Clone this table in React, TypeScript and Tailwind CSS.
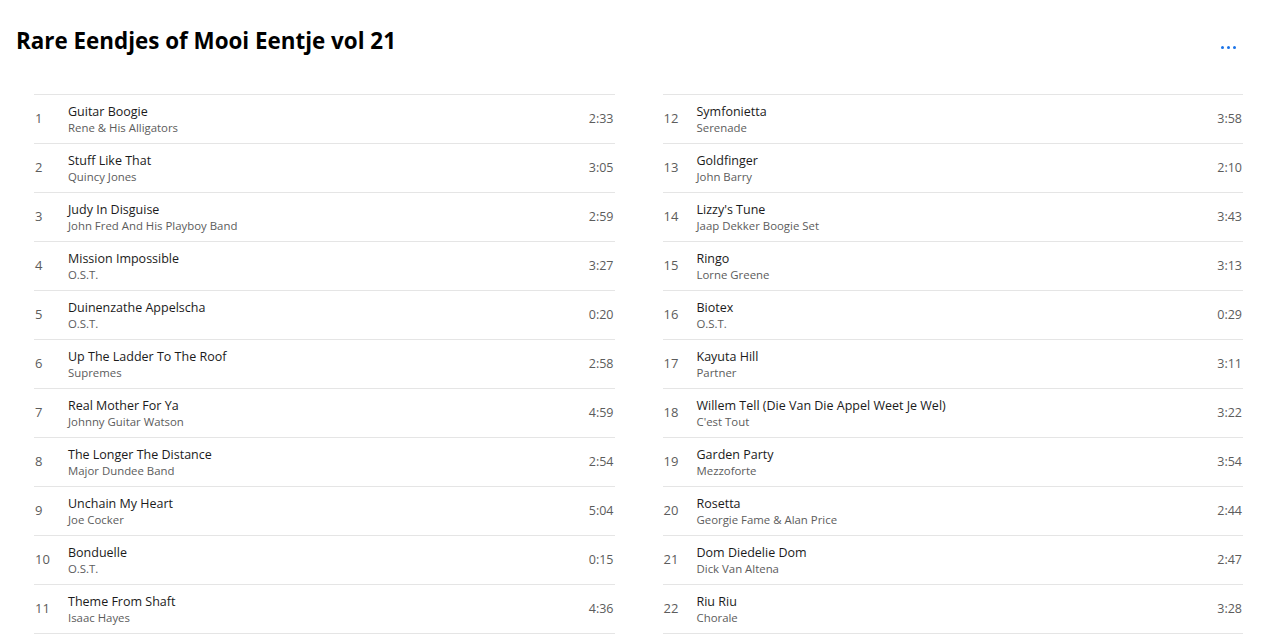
import React from 'react';

type Track = { n: number; title: string; artist: string; time: string };

const tracks: Track[] = [
  { n: 1, title: 'Guitar Boogie', artist: 'Rene & His Alligators', time: '2:33' },
  { n: 2, title: 'Stuff Like That', artist: 'Quincy Jones', time: '3:05' },
  { n: 3, title: 'Judy In Disguise', artist: 'John Fred And His Playboy Band', time: '2:59' },
  { n: 4, title: 'Mission Impossible', artist: 'O.S.T.', time: '3:27' },
  { n: 5, title: 'Duinenzathe Appelscha', artist: 'O.S.T.', time: '0:20' },
  { n: 6, title: 'Up The Ladder To The Roof', artist: 'Supremes', time: '2:58' },
  { n: 7, title: 'Real Mother For Ya', artist: 'Johnny Guitar Watson', time: '4:59' },
  { n: 8, title: 'The Longer The Distance', artist: 'Major Dundee Band', time: '2:54' },
  { n: 9, title: 'Unchain My Heart', artist: 'Joe Cocker', time: '5:04' },
  { n: 10, title: 'Bonduelle', artist: 'O.S.T.', time: '0:15' },
  { n: 11, title: 'Theme From Shaft', artist: 'Isaac Hayes', time: '4:36' },
  { n: 12, title: 'Symfonietta', artist: 'Serenade', time: '3:58' },
  { n: 13, title: 'Goldfinger', artist: 'John Barry', time: '2:10' },
  { n: 14, title: "Lizzy's Tune", artist: 'Jaap Dekker Boogie Set', time: '3:43' },
  { n: 15, title: 'Ringo', artist: 'Lorne Greene', time: '3:13' },
  { n: 16, title: 'Biotex', artist: 'O.S.T.', time: '0:29' },
  { n: 17, title: 'Kayuta Hill', artist: 'Partner', time: '3:11' },
  { n: 18, title: 'Willem Tell (Die Van Die Appel Weet Je Wel)', artist: "C'est Tout", time: '3:22' },
  { n: 19, title: 'Garden Party', artist: 'Mezzoforte', time: '3:54' },
  { n: 20, title: 'Rosetta', artist: 'Georgie Fame & Alan Price', time: '2:44' },
  { n: 21, title: 'Dom Diedelie Dom', artist: 'Dick Van Altena', time: '2:47' },
  { n: 22, title: 'Riu Riu', artist: 'Chorale', time: '3:28' },
];

function TrackRow({ track }: { track: Track }) {
  return (
    <div className="flex items-center h-[49px] border-t border-[#e5e5e5]">
      <div className="w-[34px] pl-px text-[13px] text-[#5c5c5c]">{track.n}</div>
      <div className="flex-1 flex flex-col leading-none pt-px">
        <span className="text-[12.5px] text-[#1b1b1b]">{track.title}</span>
        <span className="text-[11.4px] text-[#5c5c5c] mt-[3px]">{track.artist}</span>
      </div>
      <div className="text-[12.5px] text-[#5c5c5c] pr-px">{track.time}</div>
    </div>
  );
}

export default function App() {
  const left = tracks.slice(0, 11);
  const right = tracks.slice(11);

  return (
    <div
      className="w-[1280px] h-[641px] bg-white overflow-hidden"
      style={{ fontFamily: '"Open Sans", "Noto Sans", sans-serif' }}
    >
      <div className="flex items-start justify-between pl-[16px] pr-[44px] pt-[30px] h-[66px]">
        <h1 className="text-[22.4px] font-bold text-black leading-none">Rare Eendjes of Mooi Eentje vol 21</h1>
        <button className="flex gap-[3px] mt-[16px] p-0">
          <span className="w-[3px] h-[3px] rounded-full bg-[#1a73e8]" />
          <span className="w-[3px] h-[3px] rounded-full bg-[#1a73e8]" />
          <span className="w-[3px] h-[3px] rounded-full bg-[#1a73e8]" />
        </button>
      </div>

      <div className="grid grid-cols-2 gap-x-[48px] pl-[34px] pr-[37px] mt-[28px]">
        <div className="border-b border-[#e5e5e5]">
          {left.map(t => (
            <TrackRow key={t.n} track={t} />
          ))}
        </div>
        <div className="border-b border-[#e5e5e5]">
          {right.map(t => (
            <TrackRow key={t.n} track={t} />
          ))}
        </div>
      </div>
    </div>
  );
}
